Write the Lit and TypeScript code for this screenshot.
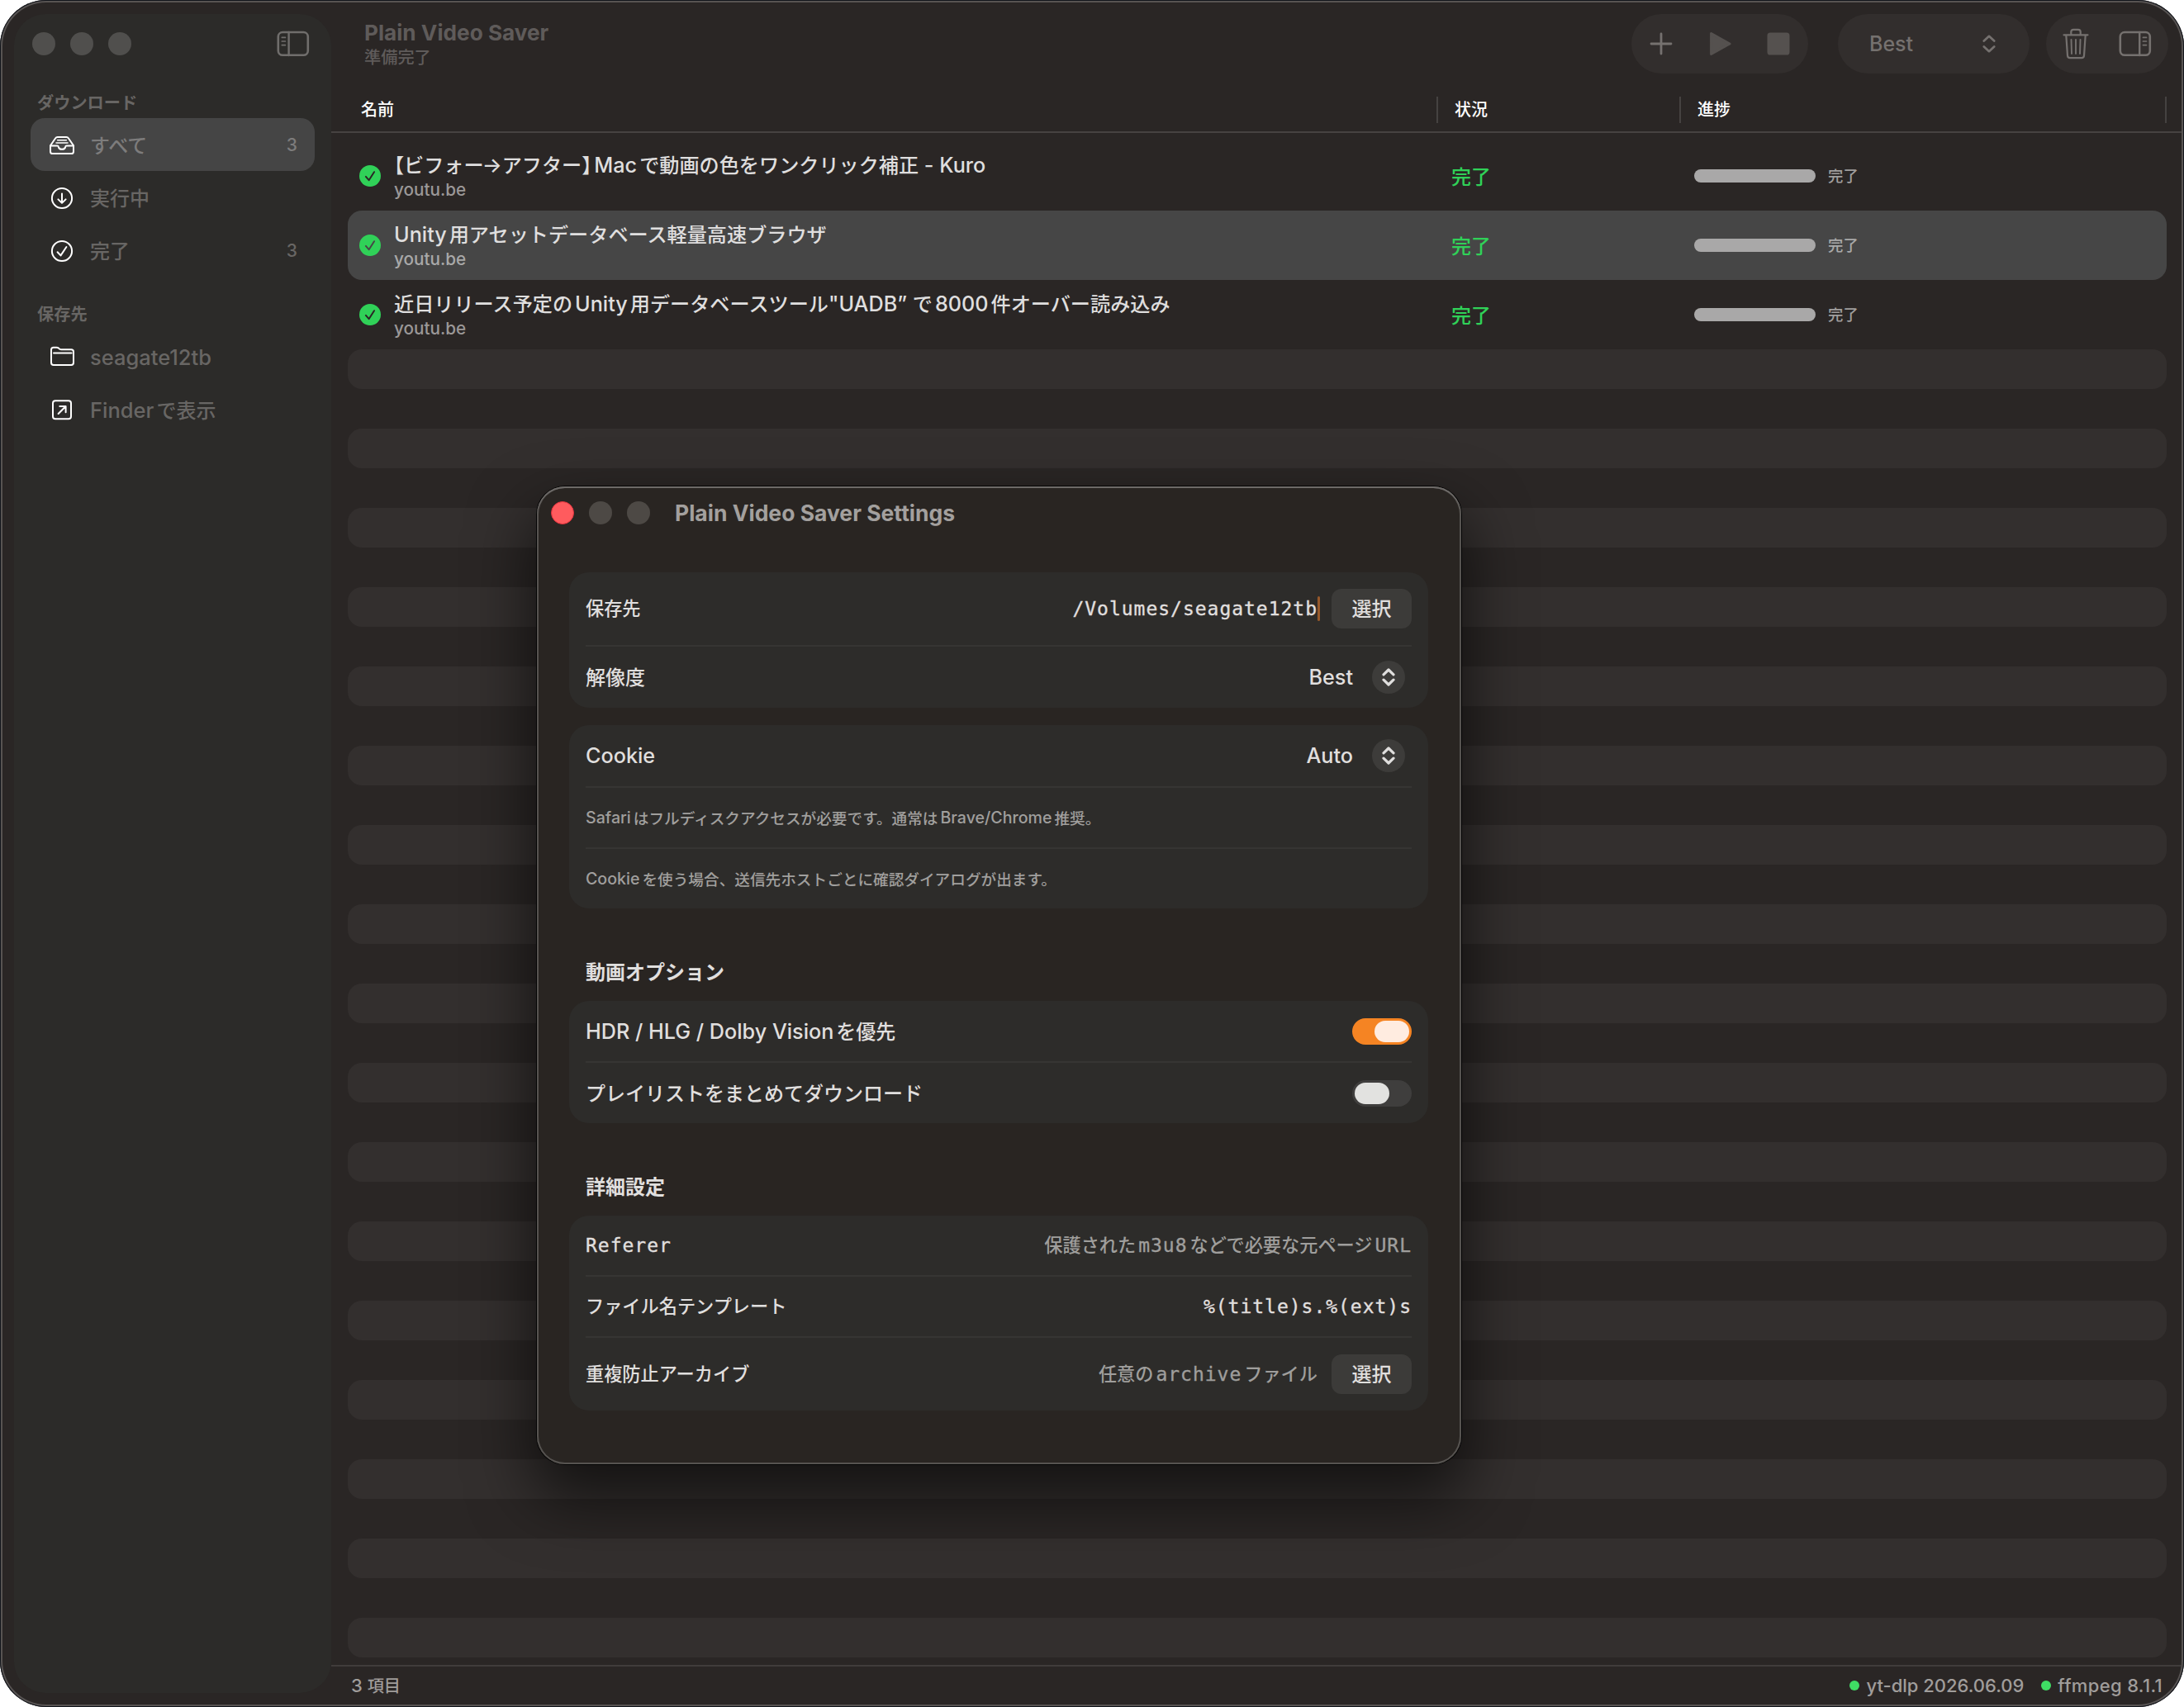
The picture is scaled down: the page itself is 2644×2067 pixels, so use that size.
import { LitElement, html, svg, css, nothing, TemplateResult } from "lit";
import { customElement, property } from "lit/decorators.js";

/* Splits a string into Latin and Japanese runs so each script gets its own size and a thin gap.
   The gap is left out where a run already has a space or a quote at that edge. */
const mix = (text: string): TemplateResult[] => {
  const runs = text.match(/\u2192|[\u0020-\u007e\u201d]+|[^\u0020-\u007e\u201d\u2192]+/g) ?? [];
  return runs.map((run, i) => {
    if (run === "\u2192") return html`<span class="ar">${run}</span>`;
    if (!/^[\u0020-\u007e\u201d]/.test(run)) return html`<span class="cj">${run}</span>`;
    const before = i > 0 && !/^[ "]/.test(run);
    const after = i < runs.length - 1 && !/ $/.test(run);
    return html`<span class="la ${before ? "before" : ""} ${after ? "after" : ""}">${run}</span>`;
  });
};

const textStyles = css`
  .cj {
    font-family: "Noto Sans CJK JP", sans-serif;
    font-size: var(--cj, 24px);
    letter-spacing: var(--cjs, 0);
    line-height: 0;
    font-feature-settings: var(--cjf, normal);
  }
  .la {
    white-space: pre;
  }
  .la.before {
    margin-left: var(--gap, 3px);
  }
  .la.after {
    margin-right: var(--gap, 3px);
  }
  .ar {
    margin-left: -2px;
  }
`;

const glyphs: Record<string, { w: number; h: number; body: unknown }> = {
  tray: {
    w: 34, h: 34,
    body: svg`<path d="M3 18.2 9.2 9.3Q10 8 11.6 8H22.4Q24 8 24.8 9.3L31 18.2V25.4Q31 28 28.4 28H5.6Q3 28 3 25.4Z"/>
      <path d="M3 18.4H11.3Q12.6 18.4 12.8 19.7 13.4 22.8 17 22.8T21.2 19.7Q21.4 18.4 22.7 18.4H31"/>
      <path stroke-width="1.5" d="M11.6 11.8H22.4M10 14.9H24"/>`,
  },
  down: {
    w: 34, h: 34,
    body: svg`<circle cx="17" cy="18" r="12.1"/><path d="M17 12.4V23.8M12.4 19.4 17 23.9 21.6 19.4"/>`,
  },
  done: {
    w: 34, h: 34,
    body: svg`<circle cx="17" cy="18" r="12.1"/><path d="M11.6 19.2 15.5 23.4 22.4 13"/>`,
  },
  folder: {
    w: 34, h: 34,
    body: svg`<path d="M4 24V8.5Q4 5.7 6.8 5.7H10.5Q12 5.7 13.2 6.8L14 7.5Q15 8.3 16.5 8.3H28.2Q31 8.3 31 11V24Q31 27 28.2 27H6.8Q4 27 4 24Z"/>
      <path d="M7 12.6H28.6"/>`,
  },
  reveal: {
    w: 34, h: 34,
    body: svg`<rect x="6" y="6.3" width="22" height="22" rx="3"/><path d="M12.6 22 21.3 13.2M14.3 12.9H21.6V20.2"/>`,
  },
  left: {
    w: 40, h: 32,
    body: svg`<rect x="1.8" y="2" width="36" height="27.8" rx="5.4" stroke-width="2.6"/>
      <path stroke-width="2.4" d="M14.6 2V30"/><path stroke-width="1.7" d="M6.3 8.4H10.4M6.3 13H10.4M6.3 17.6H10.4"/>`,
  },
  right: {
    w: 40, h: 32,
    body: svg`<rect x="1.8" y="2" width="36" height="27.8" rx="5.4" stroke-width="2.6"/>
      <path stroke-width="2.4" d="M25.2 2V30"/><path stroke-width="1.7" d="M29.4 8.4H33.5M29.4 13H33.5M29.4 17.6H33.5"/>`,
  },
  plus: { w: 28, h: 28, body: svg`<path stroke-width="2.8" d="M14 2V26M2 14H26"/>` },
  play: {
    w: 28, h: 28,
    body: svg`<path fill="currentColor" stroke-width="3" d="M3.6 1.6V26.4L26 14Z"/>`,
  },
  stop: { w: 28, h: 28, body: svg`<rect x=".5" y=".5" width="27" height="27" rx="3.6" fill="currentColor" stroke="none"/>` },
  trash: {
    w: 32, h: 38,
    body: svg`<path stroke-width="2.2" d="M1.5 8.3H30.5M10.3 8V4.6Q10.3 1.8 13.1 1.8H18.9Q21.7 1.8 21.7 4.6V8M4.3 8.5 6 33.4Q6.2 36.2 8.9 36.2H23.1Q25.8 36.2 26 33.4L27.7 8.5"/>
      <path stroke-width="1.9" d="M10.5 14 11 31M16 14V31M21.5 14 21 31"/>`,
  },
  updown: {
    w: 16, h: 22,
    body: svg`<path stroke-width="2.7" d="M1.8 7.6 8 1.8 14.2 7.6M1.8 14.4 8 20.2 14.2 14.4"/>`,
  },
  updownBold: {
    w: 16, h: 22,
    body: svg`<path stroke-width="3.2" d="M2 7.8 8 2 14 7.8M2 14.2 8 20 14 14.2"/>`,
  },
  badge: {
    w: 26, h: 26,
    body: svg`<circle cx="13" cy="13" r="13" fill="#30d158" stroke="none"/><path stroke-width="2" d="M7.9 13.9 11.6 18.2 18 8.2"/>`,
  },
};

@customElement("ui-icon")
class UiIcon extends LitElement {
  @property() name = "";
  static styles = css`
    :host {
      display: block;
      flex: none;
    }
    svg {
      display: block;
      fill: none;
      stroke: currentColor;
      stroke-width: 2;
      stroke-linecap: round;
      stroke-linejoin: round;
    }
  `;
  render() {
    const g = glyphs[this.name];
    return html`<svg width=${g.w} height=${g.h} viewBox="0 0 ${g.w} ${g.h}">${g.body}</svg>`;
  }
}

@customElement("app-sidebar")
class AppSidebar extends LitElement {
  static styles = [
    textStyles,
    css`
      :host {
        display: block;
        width: 384px;
        margin: 17px 0 17px 17px;
        border-radius: 38px;
        background: #2c2b29;
        color: #686664;
        font-size: 25.5px;
      }
      .top {
        display: flex;
        align-items: center;
        height: 72px;
        padding: 0 26px 0 22px;
        gap: 18px;
      }
      .dot {
        width: 28px;
        height: 28px;
        border-radius: 50%;
        background: #504f4d;
      }
      .toggle {
        margin-left: auto;
        color: #706e6c;
      }
      .heading {
        --cj: 20.2px;
        height: 38px;
        line-height: 40px;
        padding: 16px 0 0 28px;
        font-size: 20px;
        font-weight: 700;
      }
      .places {
        padding-top: 22px;
      }
      .places .heading {
        padding-top: 4px;
        height: 39px;
      }
      .item {
        display: flex;
        align-items: center;
        height: 64px;
        margin: 0 20px;
        padding: 0 21px 0 21px;
        border-radius: 17px;
      }
      .item ui-icon {
        color: #fff;
        margin-right: 17px;
      }
      .item.on {
        background: #454545;
        color: #7d7c7c;
      }
      .count {
        margin-left: auto;
        font-size: 21px;
        font-weight: 500;
      }
      .label {
        font-weight: 500;
      }
    `,
  ];
  item(icon: string, label: string, count?: number, on = false) {
    return html`<div class="item ${on ? "on" : ""}">
      <ui-icon name=${icon}></ui-icon><span class="label">${mix(label)}</span>
      ${count ? html`<span class="count">${count}</span>` : nothing}
    </div>`;
  }
  render() {
    return html`
      <div class="top">
        <i class="dot"></i><i class="dot"></i><i class="dot"></i>
        <ui-icon class="toggle" name="left"></ui-icon>
      </div>
      <div class="heading">${mix("ダウンロード")}</div>
      ${this.item("tray", "すべて", 3, true)} ${this.item("down", "実行中")} ${this.item("done", "完了", 3)}
      <div class="places">
        <div class="heading">${mix("保存先")}</div>
        ${this.item("folder", "seagate12tb")} ${this.item("reveal", "Finderで表示")}
      </div>
    `;
  }
}

@customElement("download-list")
class DownloadList extends LitElement {
  static styles = [
    textStyles,
    css`
      :host {
        display: flex;
        flex-direction: column;
        flex: 1;
        min-height: 0;
      }
      .head {
        display: grid;
        grid-template-columns: 1340px 294px 588px;
        align-items: center;
        height: 53px;
        margin-right: 3px;
        border-bottom: 2px solid #464241;
        color: #fff;
        --cj: 20px;
        font-size: 20px;
        font-weight: 500;
      }
      .head span.col {
        height: 32px;
        line-height: 33px;
        padding-left: 20px;
        border-right: 2px solid #454241;
      }
      .head span.col:first-child {
        padding-left: 36px;
      }
      .body {
        flex: 1;
        overflow: hidden;
        padding: 10px 21px 0 20px;
      }
      .row {
        display: flex;
        align-items: center;
        height: 84px;
        border-radius: 17px;
        padding-left: 14px;
      }
      .row.on {
        background: #464646;
      }
      .badge {
        color: #2a2625;
        margin-right: 16px;
      }
      .on .badge {
        color: #464646;
      }
      .name {
        width: 1280px;
        flex: none;
        padding-top: 1px;
      }
      .title {
        --cj: 24.15px;
        --cjf: "halt";
        line-height: 32px;
        font-size: 25.2px;
        font-weight: 450;
        color: #dfdede;
        white-space: nowrap;
      }
      .title .cj {
        font-weight: 500;
      }
      .host {
        padding-top: 1px;
        line-height: 26px;
        font-size: 20.7px;
        font-weight: 500;
        color: #9b9898;
      }
      .state {
        width: 294px;
        font-size: 25px;
        line-height: 32px;
        padding-top: 1px;
        font-weight: 500;
        color: #30d158;
      }
      .bar {
        width: 147px;
        height: 16px;
        border-radius: 8px;
        background: #a9a8a8;
        margin-right: 15px;
      }
      .note {
        --cj: 18.4px;
        font-size: 20px;
        font-weight: 500;
        color: #a09e9d;
      }
      .on .note,
      .on .host {
        color: #a9a9a9;
      }
      .stripe {
        height: 48px;
        margin-bottom: 48px;
        border-radius: 17px;
        background: #332f2e;
      }
    `,
  ];
  rows = [
    "【ビフォー→アフター】Macで動画の色をワンクリック補正 - Kuro",
    "Unity用アセットデータベース軽量高速ブラウザ",
    "近日リリース予定のUnity用データベースツール\"UADB\u201d で8000件オーバー読み込み",
  ];
  render() {
    return html`
      <div class="head">
        ${["名前", "状況", "進捗"].map((c) => html`<span class="col">${mix(c)}</span>`)}
      </div>
      <div class="body">
        ${this.rows.map(
          (title, i) => html`<div class="row ${i === 1 ? "on" : ""}">
            <ui-icon class="badge" name="badge"></ui-icon>
            <div class="name">
              <div class="title">${mix(title)}</div>
              <div class="host">youtu.be</div>
            </div>
            <div class="state">${mix("完了")}</div>
            <div class="bar"></div>
            <div class="note">${mix("完了")}</div>
          </div>`
        )}
        ${Array.from({ length: 17 }, () => html`<div class="stripe"></div>`)}
      </div>
    `;
  }
}

@customElement("settings-window")
class SettingsWindow extends LitElement {
  static styles = [
    textStyles,
    css`
      :host {
        display: block;
        box-sizing: border-box;
        width: 1119px;
        height: 1184px;
        border-radius: 34px;
        background: #292522;
        box-shadow: inset 0 2px 0 #6d6a68, inset 0 0 0 2px #565350, 0 0 0 1px #050505,
          0 36px 76px 6px rgba(0, 0, 0, 0.6);
        color: #e0dfde;
        font-size: 25.2px;
        font-weight: 500;
      }
      .bar {
        display: flex;
        align-items: center;
        height: 64px;
        padding-left: 17px;
        gap: 18px;
      }
      .dot {
        width: 28px;
        height: 28px;
        box-sizing: border-box;
        border-radius: 50%;
        background: #4d4945;
      }
      .dot.close {
        background: #ff5b5e;
        border: 1px solid #e3323d;
      }
      .caption {
        margin-left: 12px;
        font-size: 26.5px;
        font-weight: 700;
        color: #a3a09e;
      }
      .form {
        padding: 40px 40px 0 39px;
      }
      .group {
        border-radius: 24px;
        background: #2d2c2a;
        padding: 0 20px;
        margin-bottom: 20px;
      }
      .group.first {
        margin-bottom: 21px;
      }
      .row {
        display: flex;
        align-items: center;
        box-sizing: border-box;
        height: 72px;
      }
      .row + .row {
        border-top: 2px solid #363533;
        height: 74px;
      }
      .row.h73 {
        height: 73px;
      }
      .row.h74 {
        height: 74px;
      }
      .row + .row.h75 {
        height: 75px;
      }
      .row + .row.h76 {
        height: 76px;
      }
      .row.h88 {
        height: 88px;
      }
      .row + .row.h90 {
        height: 90px;
      }
      .label {
        margin-right: auto;
      }
      .mono {
        --cj: 22.2px;
        --gap: 3px;
        font-family: "DejaVu Sans Mono", monospace;
        font-size: 23px;
        font-weight: 400;
        letter-spacing: 0.98px;
        -webkit-text-stroke: 0.35px currentColor;
      }
      .mono .cj {
        font-weight: 500;
        letter-spacing: 0;
        -webkit-text-stroke: 0;
      }
      .hint {
        color: #9f9e9c;
      }
      .small {
        --cj: 18.65px;
        font-size: 19.6px;
        color: #a09f9d;
      }
      .heading {
        height: 32px;
        line-height: 32px;
        padding: 41px 0 19px 20px;
        font-weight: 700;
      }
      .button {
        width: 97px;
        height: 48px;
        line-height: 49px;
        border-radius: 12px;
        background: #3c3b39;
        text-align: center;
        margin-left: 17px;
      }
      .caret {
        width: 3px;
        height: 30px;
        border-radius: 2px;
        background: #97592b;
        margin-right: -3px;
      }
      .pop {
        display: flex;
        align-items: center;
        justify-content: center;
        width: 40px;
        height: 40px;
        border-radius: 50%;
        background: #3d3c3a;
        margin: 0 8px 0 23px;
      }
      .switch {
        box-sizing: border-box;
        width: 72px;
        height: 32px;
        padding: 3px;
        border-radius: 16px;
        background: #3f3e3d;
      }
      .knob {
        display: block;
        width: 42px;
        height: 26px;
        border-radius: 13px;
        background: #e2e2e0;
      }
      .switch.on {
        background: #f58423;
      }
      .on .knob {
        margin-left: auto;
        background: #ffece0;
      }
    `,
  ];
  picker(label: string, value: string, cls: string) {
    return html`<div class="row ${cls}">
      <span class="label">${mix(label)}</span><span>${value}</span>
      <span class="pop"><ui-icon name="updownBold"></ui-icon></span>
    </div>`;
  }
  toggle(label: string, on: boolean, cls: string) {
    return html`<div class="row ${cls}">
      <span class="label">${mix(label)}</span>
      <span class="switch ${on ? "on" : ""}"><i class="knob"></i></span>
    </div>`;
  }
  render() {
    return html`
      <div class="bar">
        <i class="dot close"></i><i class="dot"></i><i class="dot"></i>
        <span class="caption">Plain Video Saver Settings</span>
      </div>
      <div class="form">
        <div class="group first">
          <div class="row h88">
            <span class="label mono">${mix("保存先")}</span>
            <span class="mono">/Volumes/seagate12tb</span><i class="caret"></i>
            <span class="button">${mix("選択")}</span>
          </div>
          ${this.picker("解像度", "Best", "h76")}
        </div>
        <div class="group">
          ${this.picker("Cookie", "Auto", "h74")}
          <div class="row small">${mix("Safariはフルディスクアクセスが必要です。通常はBrave/Chrome推奨。")}</div>
          <div class="row small">${mix("Cookieを使う場合、送信先ホストごとに確認ダイアログが出ます。")}</div>
        </div>
        <div class="heading">${mix("動画オプション")}</div>
        <div class="group">
          ${this.toggle("HDR / HLG / Dolby Visionを優先", true, "h73")}
          ${this.toggle("プレイリストをまとめてダウンロード", false, "h75")}
        </div>
        <div class="heading">${mix("詳細設定")}</div>
        <div class="group">
          <div class="row">
            <span class="label mono">Referer</span>
            <span class="mono hint">${mix("保護されたm3u8などで必要な元ページURL")}</span>
          </div>
          <div class="row">
            <span class="label mono">${mix("ファイル名テンプレート")}</span>
            <span class="mono">%(title)s.%(ext)s</span>
          </div>
          <div class="row h90">
            <span class="label mono">${mix("重複防止アーカイブ")}</span>
            <span class="mono hint">${mix("任意のarchiveファイル")}</span>
            <span class="button">${mix("選択")}</span>
          </div>
        </div>
      </div>
    `;
  }
}

@customElement("app-root")
class AppRoot extends LitElement {
  static styles = [
    textStyles,
    css`
      :host {
        display: block;
        position: relative;
        width: 2644px;
        height: 2067px;
        overflow: hidden;
        background: #fff;
        font-family: Inter, "Noto Sans CJK JP", sans-serif;
      }
      .window {
        display: flex;
        height: 100%;
        border-radius: 56px;
        background: #2a2625;
        box-shadow: inset 0 0 0 1px #12151b, inset 0 0 0 3px #575352;
      }
      .main {
        display: flex;
        flex-direction: column;
        flex: 1;
        min-width: 0;
      }
      .toolbar {
        display: flex;
        align-items: center;
        height: 106px;
        padding: 0 19px 0 40px;
      }
      .titles {
        margin-right: auto;
        --cj: 20.2px;
        color: #5f5b5a;
      }
      .title {
        line-height: 34px;
        font-size: 26.2px;
        font-weight: 700;
      }
      .sub {
        line-height: 26px;
        font-size: 20px;
        font-weight: 500;
      }
      .pill {
        display: flex;
        align-items: center;
        justify-content: space-between;
        box-sizing: border-box;
        height: 72px;
        border-radius: 36px;
        background: #322e2d;
        color: #75716f;
      }
      .actions {
        width: 214px;
        padding: 0 22px;
        margin-right: 36px;
      }
      .off {
        color: #55514f;
      }
      .quality {
        width: 232px;
        padding: 0 41px 0 38px;
        margin-right: 20px;
        font-size: 25px;
        font-weight: 500;
      }
      .view {
        width: 148px;
        padding: 0 20px;
      }
      .footer {
        display: flex;
        align-items: center;
        box-sizing: border-box;
        height: 51px;
        margin-right: 3px;
        padding: 0 23px 3px 24px;
        border-top: 2px solid #403c3b;
        --cj: 20.2px;
        color: #a09d9b;
        font-size: 22px;
        font-weight: 500;
      }
      .items {
        margin-right: auto;
      }
      .led {
        width: 12px;
        height: 12px;
        border-radius: 50%;
        background: #3fdd64;
        margin: 0 8px 0 21px;
      }
      .wide {
        letter-spacing: 0.35px;
      }
      .settings {
        position: absolute;
        left: 650px;
        top: 589px;
      }
    `,
  ];
  render() {
    return html`
      <div class="window">
        <app-sidebar></app-sidebar>
        <div class="main">
          <div class="toolbar">
            <div class="titles">
              <div class="title">Plain Video Saver</div>
              <div class="sub">${mix("準備完了")}</div>
            </div>
            <div class="pill actions">
              <ui-icon name="plus"></ui-icon><ui-icon class="off" name="play"></ui-icon
              ><ui-icon class="off" name="stop"></ui-icon>
            </div>
            <div class="pill quality"><span>Best</span><ui-icon name="updown"></ui-icon></div>
            <div class="pill view"><ui-icon name="trash"></ui-icon><ui-icon name="right"></ui-icon></div>
          </div>
          <download-list></download-list>
          <div class="footer">
            <span class="items">3 ${mix("項目")}</span>
            <i class="led"></i><span>yt-dlp 2026.06.09</span> <i class="led"></i><span class="wide">ffmpeg 8.1.1</span>
          </div>
        </div>
      </div>
      <settings-window class="settings"></settings-window>
    `;
  }
}
